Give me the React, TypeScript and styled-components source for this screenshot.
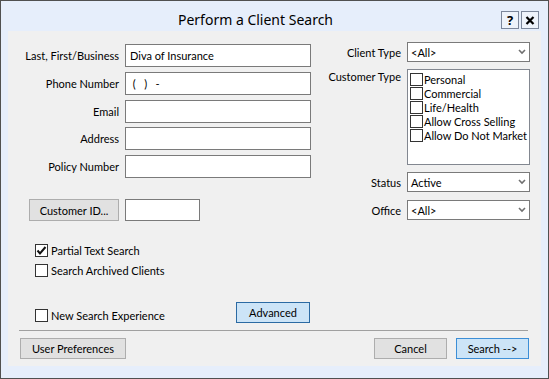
import React from "react";
import styled, { createGlobalStyle } from "styled-components";

const Global = createGlobalStyle`
  html, body { margin: 0; padding: 0; background: #ffffff; }
  body {
    font-family: Lato, "Noto Sans", sans-serif;
    font-size: 11px;
    color: #000000;
  }
  * { box-sizing: border-box; }
`;

const Window = styled.div`
  width: 549px;
  height: 379px;
  border: 1px solid #505050;
  background: #e6eefb;
  display: flex;
  flex-direction: column;
`;

const TitleBar = styled.div`
  height: 30px;
  flex: none;
  display: flex;
  align-items: flex-end;
  padding: 0 9px 2px 9px;
`;

const Title = styled.div`
  flex: 1;
  text-align: center;
  font-family: "Noto Sans", sans-serif;
  font-size: 14px;
  line-height: 18px;
  color: #000;
`;

const TitleButtons = styled.div`
  display: flex;
  gap: 2px;
`;

const TitleButton = styled.div`
  width: 18px;
  height: 18px;
  border: 1px solid #7c879b;
  background: #eef3fb;
  display: flex;
  align-items: center;
  justify-content: center;
  font-family: "Noto Sans", sans-serif;
  font-weight: bold;
  font-size: 13px;
  line-height: 1;
`;

const Panel = styled.div`
  flex: 1;
  margin: 0 7px 12px 7px;
  background: #f0f0f0;
  display: flex;
  flex-direction: column;
  padding: 11px 12px 7px 12px;
`;

const Columns = styled.div`
  display: flex;
  align-items: flex-start;
`;

const LeftColumn = styled.div`
  width: 291px;
  margin-top: 2px;
  display: flex;
  flex-direction: column;
`;

const FieldList = styled.div`
  display: flex;
  flex-direction: column;
  gap: 4.75px;
`;

const FieldRow = styled.div`
  display: grid;
  grid-template-columns: 99px 186px;
  column-gap: 6px;
  align-items: center;
`;

const Label = styled.div`
  text-align: right;
  white-space: nowrap;
`;

const TextBox = styled.input<{ $w?: number; $h?: number }>`
  width: ${(p) => (p.$w ? `${p.$w}px` : "100%")};
  height: ${(p) => p.$h ?? 23}px;
  border: 1px solid #7a7a7a;
  background: #ffffff;
  padding: 0 4px;
  margin: 0;
  font-family: inherit;
  font-size: 11px;
  color: #000;
  outline: none;
  white-space: pre;
`;

const IdRow = styled.div`
  display: flex;
  align-items: center;
  gap: 6px;
  margin-top: 21px;
  padding-left: 9px;
`;

const Button = styled.div<{ $w: number; $h?: number; $primary?: "dark" | "light" }>`
  width: ${(p) => p.$w}px;
  height: ${(p) => p.$h ?? 21}px;
  border: 1px solid
    ${(p) =>
      p.$primary === "dark" ? "#2b6aa3" : p.$primary === "light" ? "#3c8ed6" : "#adadad"};
  background: ${(p) => (p.$primary ? "#cce4f7" : "#e1e1e1")};
  display: flex;
  align-items: center;
  justify-content: center;
  font-size: 11px;
  white-space: nowrap;
`;

const RightColumn = styled.div`
  margin-left: 6px;
  display: flex;
  flex-direction: column;
`;

const RightRow = styled.div<{ $top?: number }>`
  display: grid;
  grid-template-columns: 84px 123px;
  column-gap: 6px;
  align-items: center;
  margin-top: ${(p) => p.$top ?? 0}px;
`;

const TopLabel = styled(Label)`
  align-self: start;
  padding-top: 1px;
`;

const Combo = styled.div`
  height: 20px;
  border: 1px solid #7a7a7a;
  background: #ffffff;
  display: flex;
  align-items: center;
  justify-content: space-between;
  padding: 0 3px 0 3px;
`;

const ListBox = styled.div`
  height: 96px;
  border: 1px solid #828790;
  background: #ffffff;
  padding: 3px 2px;
  display: flex;
  flex-direction: column;
  gap: 1px;
`;

const ListItem = styled.div`
  display: flex;
  align-items: center;
  height: 13px;
  gap: 1px;
  white-space: nowrap;
`;

const Box = styled.div`
  width: 13px;
  height: 13px;
  flex: none;
  border: 1px solid #333333;
  background: #ffffff;
  display: flex;
  align-items: center;
  justify-content: center;
`;

const Options = styled.div`
  display: flex;
  flex-direction: column;
  gap: 7px;
  margin-top: 23px;
  padding-left: 15px;
`;

const CheckRow = styled.div`
  display: flex;
  align-items: center;
  gap: 3px;
  height: 13px;
  white-space: nowrap;
`;

const BottomRow = styled.div`
  width: 290px;
  display: flex;
  align-items: flex-end;
  justify-content: space-between;
  margin-top: 25px;
  padding-left: 15px;

  & > ${CheckRow} {
    margin-bottom: 1px;
  }
`;

const Separator = styled.div`
  height: 1px;
  background: #a0a0a0;
  margin: 7px 1px 7px -1px;
`;

const Footer = styled.div`
  display: flex;
  align-items: center;
  gap: 9px;
`;

const Spacer = styled.div`
  flex: 1;
`;

const Chevron = () => (
  <svg width="8" height="6" viewBox="0 0 8 6">
    <path d="M1 1 L4 4 L7 1" fill="none" stroke="#707070" strokeWidth="1.6" />
  </svg>
);

const CloseGlyph = () => (
  <svg width="10" height="9" viewBox="0 0 10 9">
    <path d="M1.5 1 L8.5 8 M8.5 1 L1.5 8" stroke="#000" strokeWidth="2.2" />
  </svg>
);

const CheckMark = () => (
  <svg width="11" height="11" viewBox="0 0 11 11">
    <path d="M1.5 5.5 L4 8.5 L9.5 2" fill="none" stroke="#111" strokeWidth="2" />
  </svg>
);

function Check({ checked, label }: { checked?: boolean; label: string }) {
  return (
    <CheckRow>
      <Box>{checked && <CheckMark />}</Box>
      <span>{label}</span>
    </CheckRow>
  );
}

function ComboBox({ value }: { value: string }) {
  return (
    <Combo>
      <span>{value}</span>
      <Chevron />
    </Combo>
  );
}

const fields = [
  { label: "Last, First/Business", value: "Diva of Insurance" },
  { label: "Phone Number", value: " (   )   -" },
  { label: "Email", value: "" },
  { label: "Address", value: "" },
  { label: "Policy Number", value: "" },
];

const customerTypes = [
  "Personal",
  "Commercial",
  "Life/Health",
  "Allow Cross Selling",
  "Allow Do Not Market",
];

export default function App() {
  return (
    <>
      <Global />
      <Window>
        <TitleBar>
          <Title>Perform a Client Search</Title>
          <TitleButtons>
            <TitleButton>?</TitleButton>
            <TitleButton>
              <CloseGlyph />
            </TitleButton>
          </TitleButtons>
        </TitleBar>
        <Panel>
          <Columns>
            <LeftColumn>
              <FieldList>
                {fields.map((f) => (
                  <FieldRow key={f.label}>
                    <Label>{f.label}</Label>
                    <TextBox defaultValue={f.value} readOnly />
                  </FieldRow>
                ))}
              </FieldList>
              <IdRow>
                <Button $w={90} $h={22}>Customer ID...</Button>
                <TextBox $w={75} $h={22} readOnly />
              </IdRow>
            </LeftColumn>
            <RightColumn>
              <RightRow>
                <Label>Client Type</Label>
                <ComboBox value="<All>" />
              </RightRow>
              <RightRow $top={7}>
                <TopLabel>Customer Type</TopLabel>
                <ListBox>
                  {customerTypes.map((t) => (
                    <ListItem key={t}>
                      <Box />
                      <span>{t}</span>
                    </ListItem>
                  ))}
                </ListBox>
              </RightRow>
              <RightRow $top={7}>
                <Label>Status</Label>
                <ComboBox value="Active" />
              </RightRow>
              <RightRow $top={8}>
                <Label>Office</Label>
                <ComboBox value="<All>" />
              </RightRow>
            </RightColumn>
          </Columns>
          <Options>
            <Check checked label="Partial Text Search" />
            <Check label="Search Archived Clients" />
          </Options>
          <BottomRow>
            <Check label="New Search Experience" />
            <Button $w={74} $primary="dark">Advanced</Button>
          </BottomRow>
          <Separator />
          <Footer>
            <Button $w={106}>User Preferences</Button>
            <Spacer />
            <Button $w={73}>Cancel</Button>
            <Button $w={73} $primary="light">Search --&gt;</Button>
          </Footer>
        </Panel>
      </Window>
    </>
  );
}
